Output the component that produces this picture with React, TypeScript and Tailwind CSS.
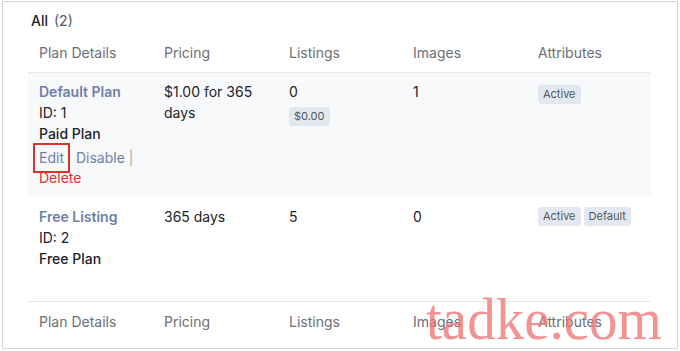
import React from "react";

const cols = "grid grid-cols-[125px_125px_124px_125px_124px]";

function Badge({ children }: { children: React.ReactNode }) {
  return (
    <span className="inline-flex items-center h-[19px] px-[5px] rounded-[3px] bg-[#e3e7ef] text-[11px] text-[#50575e] leading-none">
      {children}
    </span>
  );
}

function HeaderRow({ border }: { border: "top" | "bottom" }) {
  const labels = ["Plan Details", "Pricing", "Listings", "Images", "Attributes"];
  return (
    <div
      className={`${cols} ${border === "bottom" ? "border-b pt-[11px] pb-[9px]" : "border-t pt-[9px] pb-[11px]"} border-[#e6e8eb]`}
    >
      {labels.map((l) => (
        <div key={l} className="px-[11px] text-[14px] leading-[21px] text-[#6b6f76]">
          {l}
        </div>
      ))}
    </div>
  );
}

export default function App() {
  return (
    <div
      className="w-[680px] h-[351px] bg-white relative overflow-hidden"
      style={{ fontFamily: "Inter, 'Liberation Sans', sans-serif" }}
    >
      <div className="absolute left-[2px] top-[1px] w-[676px] h-[348px] border border-[#d5d5d5]" />
      <div className="pl-[28px] pt-[11px]">
        <div className="pl-[3px] text-[14px] leading-[20px] text-[#1d2327] flex items-center">
          <span className="font-medium">All</span>
          <span className="ml-[6px] text-[#50575e]">(2)</span>
        </div>
        <div className="w-[623px]">
          <HeaderRow border="bottom" />
          {/* Row 1 */}
          <div className={`${cols} bg-[#f8f9fa] pt-[8px] pb-[9px] text-[14px] leading-[21px] text-[#1d2327]`}>
            <div className="px-[11px]">
              <div className="font-semibold text-[#6e7fa7]">Default Plan</div>
              <div>ID: 1</div>
              <div className="font-medium">Paid Plan</div>
              <div className="flex items-center h-[27px]">
                <span className="relative text-[#6e7fa7]">
                  Edit
                  <span className="absolute left-[-6px] right-[-6px] top-[-4px] bottom-[-5px] border-2 border-[#d9342b]" />
                </span>
                <span className="ml-[12px] text-[#6e7fa7]">Disable</span>
                <span className="ml-[4px] text-[#a7aaad]">|</span>
              </div>
              <div className="text-[#d63638] mt-[-4px]">Delete</div>
            </div>
            <div className="px-[11px]">
              $1.00 for 365
              <br />
              days
            </div>
            <div className="px-[11px]">
              <div>0</div>
              <div className="mt-[2px]">
                <Badge>$0.00</Badge>
              </div>
            </div>
            <div className="px-[11px]">1</div>
            <div className="px-[11px] pt-[1px]">
              <Badge>Active</Badge>
            </div>
          </div>
          {/* Row 2 */}
          <div className={`${cols} pt-[9px] pb-[32px] text-[14px] leading-[21px] text-[#1d2327]`}>
            <div className="px-[11px]">
              <div className="font-semibold text-[#6e7fa7]">Free Listing</div>
              <div>ID: 2</div>
              <div className="font-medium">Free Plan</div>
            </div>
            <div className="px-[11px]">365 days</div>
            <div className="px-[11px]">5</div>
            <div className="px-[11px]">0</div>
            <div className="px-[11px] pt-[1px] flex gap-[3px] items-start">
              <Badge>Active</Badge>
              <Badge>Default</Badge>
            </div>
          </div>
          <HeaderRow border="top" />
        </div>
      </div>
      <div
        className="absolute left-[426px] top-[289px] text-[60px] leading-none text-[#f07878] opacity-80 origin-left scale-x-[0.95]"
        style={{ fontFamily: "'Liberation Serif', serif" }}
      >
        tadke.com
      </div>
    </div>
  );
}
